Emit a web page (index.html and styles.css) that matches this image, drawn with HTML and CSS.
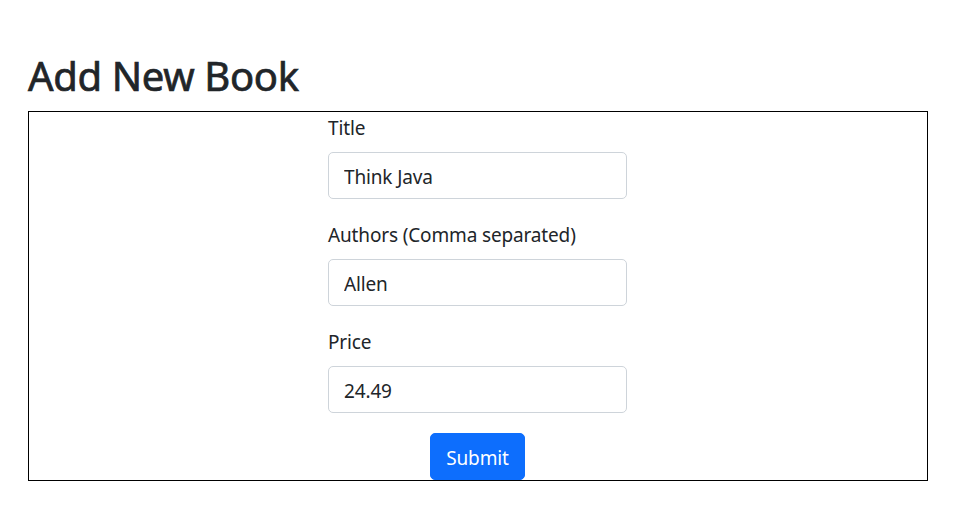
FILE: index.html
```html
<!DOCTYPE html>
<html>
<head>
<meta charset="utf-8">
<link rel="stylesheet" href="styles.css">
</head>
<body>
<div class="page">
  <h1 class="heading">Add New Book</h1>
  <div class="box">
    <form class="book-form">
      <div class="field">
        <label class="label">Title</label>
        <input class="input" type="text" value="Think Java">
      </div>
      <div class="field">
        <label class="label">Authors (Comma separated)</label>
        <input class="input" type="text" value="Allen">
      </div>
      <div class="field">
        <label class="label">Price</label>
        <input class="input" type="text" value="24.49">
      </div>
      <div class="actions">
        <button class="btn" type="button">Submit</button>
      </div>
    </form>
  </div>
</div>
</body>
</html>
```

FILE: styles.css
```css
* { box-sizing: border-box; }
body {
  margin: 0;
  font-family: "Noto Sans", "Open Sans", sans-serif;
  font-size: 19px;
  letter-spacing: -0.15px;
  line-height: 30px;
  color: #212529;
  background: #fff;
}
.page {
  padding: 51px 0 0 28px;
  width: 928px;
}
.heading {
  margin: 0 0 10px;
  font-size: 40px;
  font-weight: 400;
  line-height: 50px;
  letter-spacing: -0.35px;
  -webkit-text-stroke: 0.7px #212529;
}
.box {
  border: 1px solid #000;
  width: 900px;
  padding-right: 1px;
  display: flex;
  justify-content: center;
}
.book-form {
  width: 299px;
  display: flex;
  flex-direction: column;
}
.field {
  display: flex;
  flex-direction: column;
  margin-bottom: 20px;
}
.label {
  margin-bottom: 10px;
  height: 30px;
  padding-top: 1px;
}
.input {
  font: inherit;
  letter-spacing: inherit;
  color: #212529;
  height: 47px;
  padding: 9px 15px 6px;
  border: 1px solid #ced4da;
  border-radius: 5px;
  background: #fff;
  outline: none;
}
.actions {
  display: flex;
  justify-content: center;
}
.btn {
  font: inherit;
  letter-spacing: inherit;
  color: #fff;
  background: #0d6efd;
  border: 1px solid #0d6efd;
  border-radius: 5px;
  height: 47px;
  width: 95px;
  padding: 3px 0 0;
}
```
